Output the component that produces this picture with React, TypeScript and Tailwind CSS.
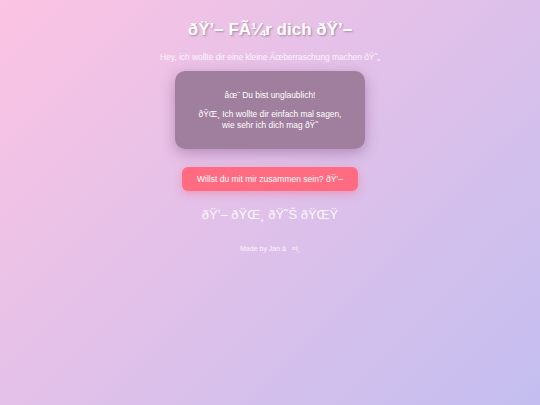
export default function App() {
  return (
    <div className="min-h-screen w-full bg-[linear-gradient(135deg,#fcc3e3_0%,#c3bef0_100%)] font-['Liberation_Sans',Arial,sans-serif] text-white">
      <div className="flex flex-col items-center pt-[20px]">
        <h1 className="text-[17px] font-bold leading-[20px] [text-shadow:1px_1px_2px_rgba(0,0,0,0.3)]">
          ðŸ’– FÃ¼r dich ðŸ’–
        </h1>
        <p className="mt-[11px] text-[8.4px] leading-[12px] text-white/80">
          Hey, ich wollte dir eine kleine Ãœberraschung machen ðŸ˜„
        </p>

        <div className="mt-[8px] flex h-[78px] w-[190px] flex-col items-center justify-center rounded-[10px] bg-[#9b7b99]/95 text-center text-[8.4px] leading-[11px] shadow-[0_4px_14px_rgba(90,40,90,0.35)]">
          <p>âœ¨ Du bist unglaublich!</p>
          <p className="mt-[8px]">
            ðŸŒ¸ Ich wollte dir einfach mal sagen,
            <br />
            wie sehr ich dich mag ðŸ˜
          </p>
        </div>

        <button className="mt-[18px] h-[24px] w-[176px] rounded-[6px] bg-[#ff6b81] text-[8.5px] text-white shadow-[0_3px_8px_rgba(255,80,110,0.35)]">
          Willst du mit mir zusammen sein? ðŸ’–
        </button>

        <div className="mt-[16px] text-[13px] leading-[16px] text-white/85">
          ðŸ’– ðŸŒ¸ ðŸ˜Š ðŸŒŸ
        </div>

        <p className="mt-[21px] text-[7px] leading-[9px] text-white/80">
          Made by Jan â&nbsp;&nbsp;&nbsp;¤ï¸
        </p>
      </div>
    </div>
  );
}
